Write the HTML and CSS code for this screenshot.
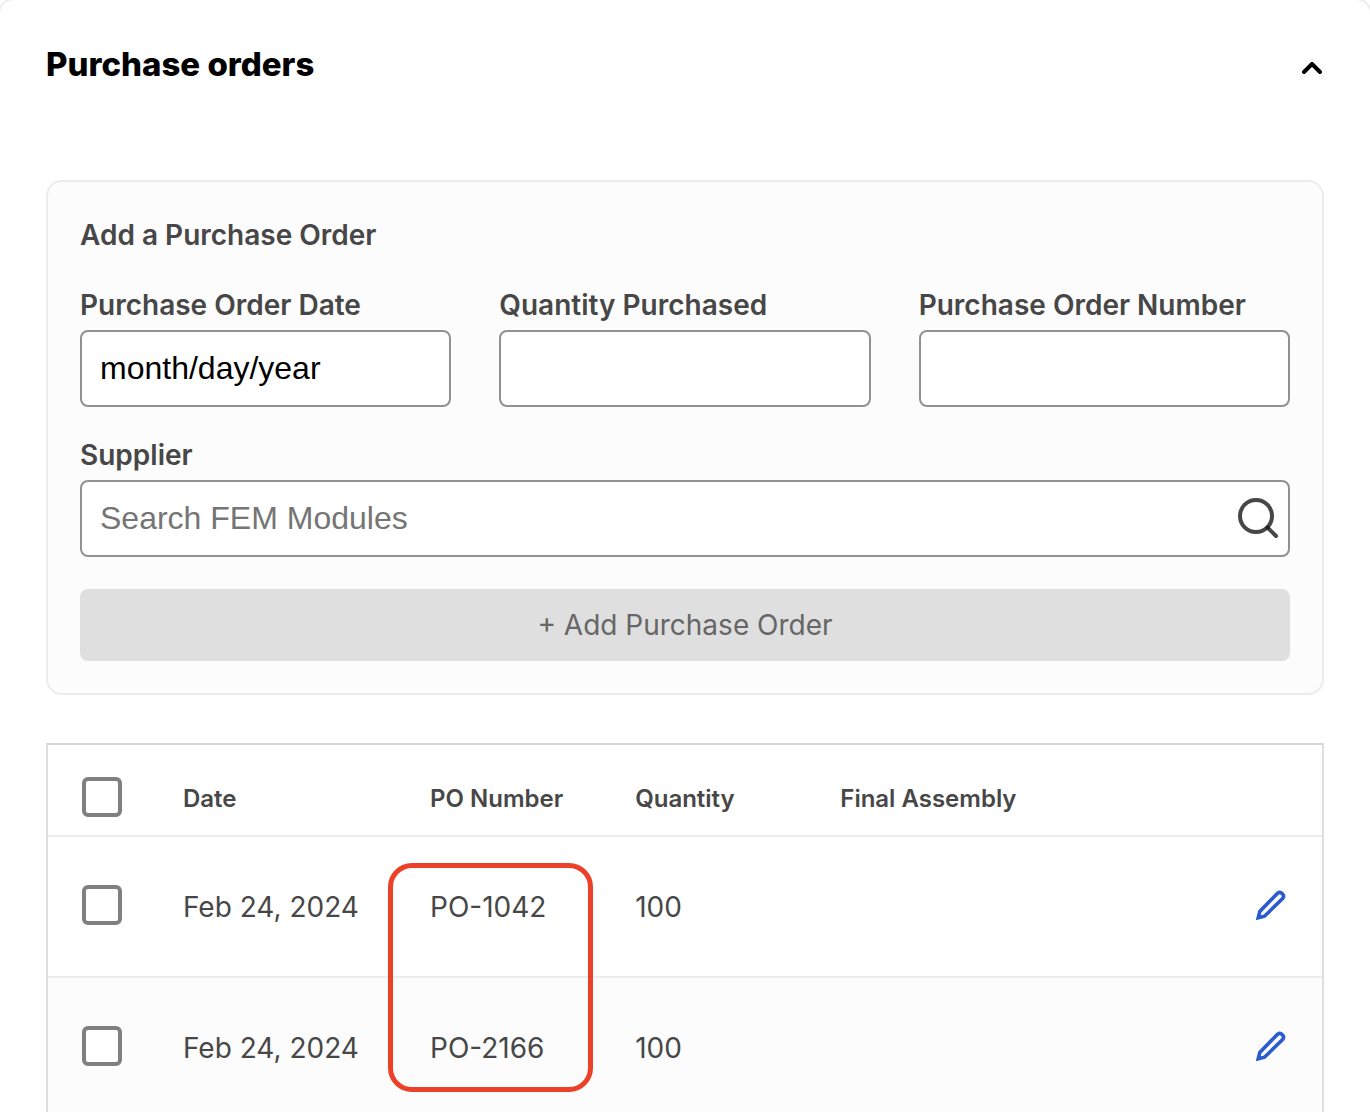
FILE: index.html
```html
<!DOCTYPE html>
<html lang="en">
<head>
  <meta charset="UTF-8">
  <meta name="viewport" content="width=device-width, initial-scale=1.0">
  <title>Purchase orders</title>
  <link rel="stylesheet" href="styles.css">
</head>
<body>
  <main class="page">
    <section class="card">
      <header class="card-header">
        <h1>Purchase orders</h1>
        <button type="button" class="icon-btn" aria-label="Collapse">
          <svg width="20" height="12" viewBox="0 0 20 12" fill="none" stroke="#000" stroke-width="4" stroke-linecap="round" stroke-linejoin="round"><path d="M2 10l8-8 8 8"/></svg>
        </button>
      </header>

      <form class="panel">
        <h2>Add a Purchase Order</h2>
        <div class="fields">
          <div class="field">
            <label for="po-date">Purchase Order Date</label>
            <input type="text" id="po-date" value="month/day/year">
          </div>
          <div class="field">
            <label for="quantity">Quantity Purchased</label>
            <input type="text" id="quantity">
          </div>
          <div class="field">
            <label for="po-number">Purchase Order Number</label>
            <input type="text" id="po-number">
          </div>
        </div>
        <div class="field">
          <label for="supplier">Supplier</label>
          <div class="search">
            <input type="text" id="supplier" placeholder="Search FEM Modules">
            <svg class="search-icon" width="40" height="40" viewBox="0 0 40 40" fill="none" stroke="#474747" stroke-width="4" stroke-linecap="round"><circle cx="18" cy="18" r="16"/><path d="M29.500 29.500l8.500 8.500"/><circle cx="29.500" cy="29.500" r="1" stroke="#1c1c1c" stroke-width="2"/></svg>
          </div>
        </div>
        <button type="button" class="add-btn" disabled>+ Add Purchase Order</button>
      </form>

      <div class="table-wrap">
        <table>
          <colgroup>
            <col class="col-check">
            <col class="col-date">
            <col class="col-po">
            <col class="col-qty">
            <col>
            <col class="col-edit">
          </colgroup>
          <thead>
            <tr>
              <th class="check"><input type="checkbox" aria-label="Select all"></th>
              <th>Date</th>
              <th>PO Number</th>
              <th>Quantity</th>
              <th>Final Assembly</th>
              <th></th>
            </tr>
          </thead>
          <tbody>
            <tr>
              <td class="check"><input type="checkbox" aria-label="Select PO-1042"></td>
              <td>Feb 24, 2024</td>
              <td class="po">PO-1042<span class="highlight"></span></td>
              <td>100</td>
              <td></td>
              <td class="edit">
                <button type="button" class="icon-btn" aria-label="Edit PO-1042">
                  <svg width="30" height="30" viewBox="0 0 30 30" fill="none" stroke="#2a5bd0" stroke-width="3.600"><path d="M2.200 27.800l1.600-6.300L21.400 3.400a3.700 3.700 0 0 1 5.200 5.200L8.500 26.200z"/></svg>
                </button>
              </td>
            </tr>
            <tr>
              <td class="check"><input type="checkbox" aria-label="Select PO-2166"></td>
              <td>Feb 24, 2024</td>
              <td>PO-2166</td>
              <td>100</td>
              <td></td>
              <td class="edit">
                <button type="button" class="icon-btn" aria-label="Edit PO-2166">
                  <svg width="30" height="30" viewBox="0 0 30 30" fill="none" stroke="#2a5bd0" stroke-width="3.600"><path d="M2.200 27.800l1.600-6.300L21.400 3.400a3.700 3.700 0 0 1 5.200 5.200L8.500 26.200z"/></svg>
                </button>
              </td>
            </tr>
          </tbody>
        </table>
      </div>
    </section>
  </main>
</body>
</html>
```
FILE: styles.css
```css
* {
  box-sizing: border-box;
}
body {
  margin: 0;
  background: #fff;
  color: #474747;
  font-family: Inter, "Liberation Sans", sans-serif;
  font-size: 28px;
}
.page {
  height: 100vh;
  overflow: auto;
  scrollbar-width: none;
}
.card {
  margin: -2px;
  padding: 40px 46px;
  border: 2px solid #ececec;
  border-radius: 16px;
}
.card-header {
  display: flex;
  align-items: center;
  justify-content: space-between;
  margin-bottom: 92px;
}
h1 {
  margin: 0;
  color: #000;
  font-size: 33px;
  font-weight: 800;
  line-height: 48px;
}
.icon-btn {
  display: flex;
  padding: 0;
  border: 0;
  background: none;
  cursor: pointer;
}
.card-header .icon-btn {
  padding: 8px 2px 0;
}

/* form */
.panel {
  padding: 32px;
  border: 2px solid #ececec;
  border-radius: 16px;
  background: #fcfcfc;
}
h2,
label {
  font-size: 28px;
  font-weight: 600;
  line-height: 42px;
}
h2 {
  margin: 0 0 28px;
}
.fields {
  display: grid;
  grid-template-columns: repeat(3, 1fr);
  gap: 48px;
  margin-bottom: 27px;
}
.field label {
  display: block;
  margin-bottom: 4px;
}
.field input {
  display: block;
  width: 100%;
  height: 77px;
  padding: 0 18px;
  border: 2px solid #919191;
  border-radius: 8px;
  background: #fff;
  color: #000;
  font-family: "Liberation Sans", Arial, sans-serif;
  font-size: 32px;
}
.field input::placeholder {
  color: #757575;
}
.search {
  position: relative;
}
.search-icon {
  position: absolute;
  top: 18px;
  right: 12px;
}
.add-btn {
  display: block;
  width: 100%;
  height: 72px;
  margin-top: 32px;
  border: 0;
  border-radius: 8px;
  background: #dfdfdf;
  color: #666;
  font: inherit;
}

/* table */
.table-wrap {
  margin-top: 48px;
  border: 2px solid #dfdfdf;
  border-top-color: #d6d6d6;
}
table {
  width: 100%;
  border-collapse: separate;
  border-spacing: 0;
  table-layout: fixed;
}
.col-check {
  width: 8%;
}
.col-date {
  width: 19.4%;
}
.col-po,
.col-qty {
  width: 16.1%;
}
.col-edit {
  width: 16%;
}
th,
td {
  padding: 0 0 0 33px;
  text-align: left;
  vertical-align: top;
  border-bottom: 2px solid #ececec;
}
th {
  height: 92px;
  padding-top: 36px;
  font-size: 24px;
  font-weight: 600;
  line-height: 36px;
}
td {
  height: 141px;
  padding-top: 48px;
  line-height: 44px;
}
.check {
  padding-left: 34px;
}
th.check {
  padding-top: 32px;
}
tbody tr:nth-child(even) {
  background: #fcfcfc;
}
input[type="checkbox"] {
  display: block;
  width: 40px;
  height: 40px;
  margin: 0;
  appearance: none;
  border: 4px solid #808080;
  border-radius: 6px;
  background: #fff;
}
td.edit {
  padding-top: 53px;
  padding-right: 36px;
}
.edit .icon-btn {
  margin-left: auto;
}
.po {
  position: relative;
}
.highlight {
  position: absolute;
  top: 26px;
  left: -9px;
  width: 205px;
  height: 229px;
  border: 5px solid #ec4128;
  border-radius: 24px;
  pointer-events: none;
}
```
